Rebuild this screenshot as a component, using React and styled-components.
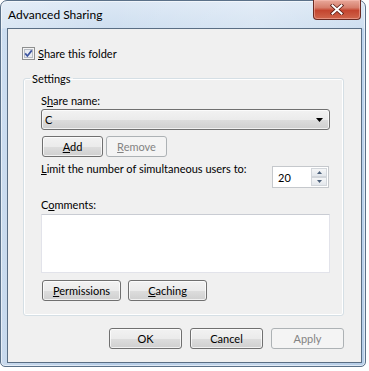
import styled, { createGlobalStyle } from 'styled-components';

const GlobalStyle = createGlobalStyle`
  html, body {
    margin: 0;
    padding: 0;
    background: #ffffff;
  }
  body {
    font-family: Lato, "Liberation Sans", Arial, sans-serif;
    font-size: 11px;
    color: #000;
  }
  * {
    box-sizing: border-box;
  }
`;

function CheckMark() {
  return (
    <svg width="13" height="13" viewBox="0 0 13 13">
      <rect x="0.5" y="0.5" width="12" height="12" fill="#f4f4f4" stroke="#8e8f8f" />
      <rect x="2.5" y="2.5" width="8" height="8" fill="#e9ecf1" stroke="#b7bcc4" />
      <path d="M3.2 6.4 L5.4 9 L9.8 3.4" fill="none" stroke="#3c54a0" strokeWidth="1.7" />
    </svg>
  );
}

function CloseGlyph() {
  return (
    <svg width="14" height="11" viewBox="0 0 14 11">
      <path d="M2.5 1.5 L11.5 9.5 M11.5 1.5 L2.5 9.5" stroke="#5a1d16" strokeWidth="3.6" strokeLinecap="square" />
      <path d="M2.5 1.5 L11.5 9.5 M11.5 1.5 L2.5 9.5" stroke="#ffffff" strokeWidth="2" strokeLinecap="square" />
    </svg>
  );
}

function ComboArrow() {
  return (
    <svg width="7" height="4" viewBox="0 0 7 4">
      <path d="M0 0 H7 L3.5 4 Z" fill="#000" />
    </svg>
  );
}

function SpinArrow({ up }) {
  return (
    <svg width="5" height="3" viewBox="0 0 5 3">
      <path d={up ? 'M0 3 H5 L2.5 0 Z' : 'M0 0 H5 L2.5 3 Z'} fill="#4c607a" />
    </svg>
  );
}

export default function App() {
  return (
    <>
      <GlobalStyle />
      <Window>
        <TitleBar>
          <Title>Advanced Sharing</Title>
          <CloseButton>
            <CloseGlyph />
          </CloseButton>
        </TitleBar>
        <Client>
          <CheckRow>
            <CheckMark />
            <span><u>S</u>hare this folder</span>
          </CheckRow>

          <Group>
            <legend>Settings</legend>
            <FieldLabel>S<u>h</u>are name:</FieldLabel>
            <Combo>
              <span>C</span>
              <ComboArrow />
            </Combo>
            <ButtonRow $gap={3} $top={6}>
              <Button $w={61}><u>A</u>dd</Button>
              <Button $w={61} disabled><u>R</u>emove</Button>
            </ButtonRow>
            <LimitRow>
              <span><u>L</u>imit the number of simultaneous users to:</span>
              <Spin>
                <span>20</span>
                <SpinButtons>
                  <SpinButton><SpinArrow up /></SpinButton>
                  <SpinButton><SpinArrow /></SpinButton>
                </SpinButtons>
              </Spin>
            </LimitRow>
            <FieldLabel $top={9}>C<u>o</u>mments:</FieldLabel>
            <Comments />
            <ButtonRow $gap={7} $top={7}>
              <Button $w={79}><u>P</u>ermissions</Button>
              <Button $w={79}><u>C</u>aching</Button>
            </ButtonRow>
          </Group>

          <DialogButtons>
            <Button $w={73}>OK</Button>
            <Button $w={73}>Cancel</Button>
            <Button $w={73} disabled>Apply</Button>
          </DialogButtons>
        </Client>
      </Window>
    </>
  );
}

const Window = styled.div`
  width: 366px;
  height: 367px;
  display: flex;
  flex-direction: column;
  padding: 0 3px 3px 6px;
  border: 1px solid #5b7189;
  border-radius: 7px 7px 5px 5px;
  background:
    linear-gradient(90deg, rgba(255,255,255,0.25), rgba(255,255,255,0) 30%, rgba(255,255,255,0.2) 70%, rgba(255,255,255,0)),
    linear-gradient(180deg, #dce8f5 0px, #cfdff0 27px, #bcd3ec 28px, #b6cde7 100%);
  box-shadow: inset 0 0 0 1px rgba(255, 255, 255, 0.55);
`;

const TitleBar = styled.div`
  height: 27px;
  display: flex;
  justify-content: space-between;
  align-items: flex-start;
  padding-left: 1px;
`;

const Title = styled.div`
  margin-top: 6px;
  line-height: 15px;
  font-size: 12px;
  color: #000;
`;

const CloseButton = styled.div`
  width: 48px;
  height: 20px;
  margin-top: -1px;
  margin-right: 1px;
  display: flex;
  align-items: center;
  justify-content: center;
  border: 1px solid #6b2a22;
  border-top: none;
  border-radius: 0 0 4px 4px;
  background: linear-gradient(180deg, #e9a99b 0%, #d67e6c 40%, #c4452f 55%, #d0664c 100%);
  box-shadow: inset 0 0 0 1px rgba(255, 200, 190, 0.45);
`;

const Client = styled.div`
  flex: 1;
  display: flex;
  flex-direction: column;
  padding: 0 17px 0 14px;
  background: #f0f0f0;
  border: 1px solid #5a6e84;
`;

const CheckRow = styled.div`
  height: 15px;
  margin-top: 17px;
  display: flex;
  align-items: center;
  gap: 3px;
  line-height: 15px;
`;

const Group = styled.fieldset`
  margin: 10px 0 0 1px;
  padding: 7px 13px 14px 17px;
  border: 1px solid #d5dfe5;
  border-radius: 3px;
  box-shadow: inset 0 0 0 1px #ffffff;
  min-width: 0;

  legend {
    margin-left: -11px;
    padding: 0 2px;
    line-height: 15px;
  }
`;

const FieldLabel = styled.div`
  margin-top: ${(p) => p.$top || 0}px;
  line-height: 15px;
`;

const Combo = styled.div`
  height: 21px;
  margin-top: 1px;
  display: flex;
  align-items: center;
  justify-content: space-between;
  padding: 0 6px 0 3px;
  border: 1px solid #707070;
  border-radius: 3px;
  background: linear-gradient(180deg, #f2f2f2 0%, #ebebeb 50%, #dddddd 51%, #cfcfcf 100%);
  box-shadow: inset 0 0 0 1px rgba(255, 255, 255, 0.7);
`;

const ButtonRow = styled.div`
  display: flex;
  gap: ${(p) => p.$gap}px;
  margin-top: ${(p) => p.$top}px;
  padding-left: 1px;
`;

const Button = styled.button`
  width: ${(p) => p.$w}px;
  height: 21px;
  padding: 0;
  font-family: inherit;
  font-size: 11px;
  color: #000;
  border: 1px solid #707070;
  border-radius: 3px;
  background: linear-gradient(180deg, #f2f2f2 0%, #ebebeb 50%, #dddddd 51%, #cfcfcf 100%);
  box-shadow: inset 0 0 0 1px rgba(255, 255, 255, 0.7);

  &:disabled {
    color: #838383;
    border-color: #adb2b5;
    background: #f4f4f4;
    box-shadow: none;
  }
`;

const LimitRow = styled.div`
  display: flex;
  justify-content: space-between;
  align-items: flex-start;
  margin-top: 4px;
  line-height: 15px;
`;

const Spin = styled.div`
  width: 57px;
  height: 22px;
  margin-top: 5px;
  margin-right: 1px;
  display: flex;
  align-items: center;
  justify-content: space-between;
  padding: 1px 1px 1px 5px;
  background: #fff;
  border: 1px solid #c5c8cc;
`;

const SpinButtons = styled.div`
  width: 16px;
  height: 100%;
  display: flex;
  flex-direction: column;
`;

const SpinButton = styled.div`
  flex: 1;
  display: flex;
  align-items: center;
  justify-content: center;
  border: 1px solid #d2d6db;
  background: linear-gradient(180deg, #f5f6f7, #e3e7ec);
`;

const Comments = styled.div`
  height: 59px;
  margin-top: 2px;
  background: #fff;
  border: 1px solid #e2e3ea;
  border-top-color: #c9ccd3;
`;

const DialogButtons = styled.div`
  display: flex;
  justify-content: flex-end;
  gap: 8px;
  margin-top: 12px;
`;
